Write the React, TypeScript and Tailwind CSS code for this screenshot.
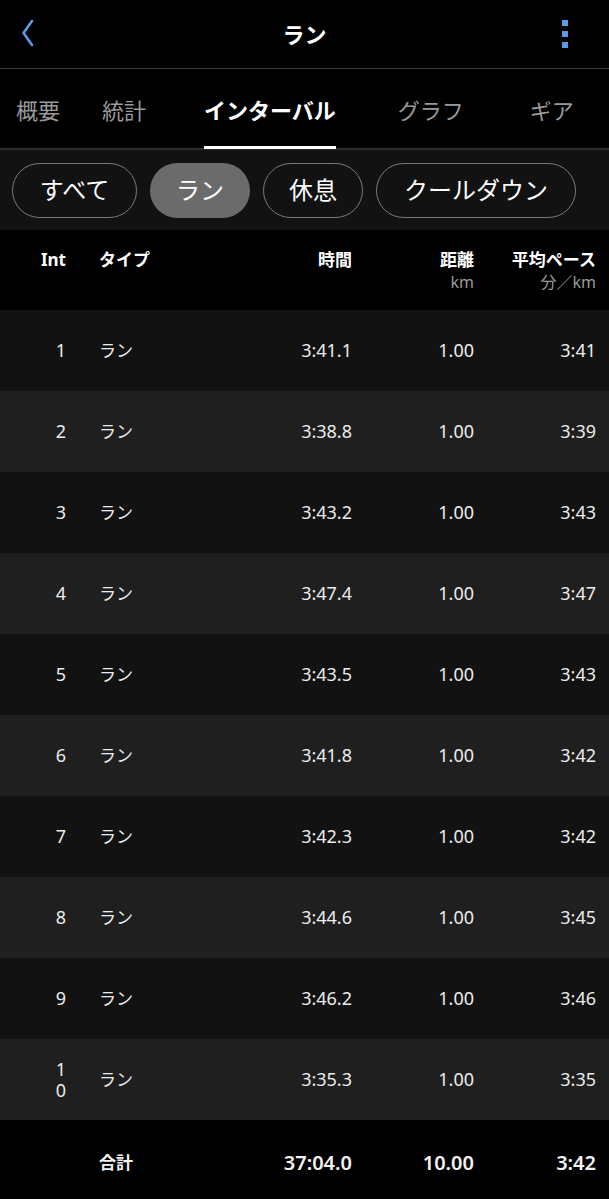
import React from "react";

const rows = [
  ["1", "3:41.1", "1.00", "3:41"],
  ["2", "3:38.8", "1.00", "3:39"],
  ["3", "3:43.2", "1.00", "3:43"],
  ["4", "3:47.4", "1.00", "3:47"],
  ["5", "3:43.5", "1.00", "3:43"],
  ["6", "3:41.8", "1.00", "3:42"],
  ["7", "3:42.3", "1.00", "3:42"],
  ["8", "3:44.6", "1.00", "3:45"],
  ["9", "3:46.2", "1.00", "3:46"],
  ["10", "3:35.3", "1.00", "3:35"],
];

export default function App() {
  return (
    <div
      className="w-[609px] h-[1199px] bg-black text-white overflow-hidden"
      style={{ fontFamily: '"Noto Sans", "Noto Sans CJK JP", sans-serif' }}
    >
      {/* Header */}
      <div className="h-[69px] flex items-center justify-between px-[20px] border-b border-[#3a3a3a]">
        <svg width="14" height="28" viewBox="0 0 14 28" className="ml-[1px] mt-[-2px]">
          <path d="M11 2 L2.5 14 L11 26" fill="none" stroke="#5b9be6" strokeWidth="2.6" strokeLinecap="round" strokeLinejoin="round" />
        </svg>
        <div className="text-[22px] font-bold leading-none ml-[12px]">ラン</div>
        <div className="flex flex-col gap-[5px] mr-[21px]">
          <div className="w-[6px] h-[6px] bg-[#5b9be6]" />
          <div className="w-[6px] h-[6px] bg-[#5b9be6]" />
          <div className="w-[6px] h-[6px] bg-[#5b9be6]" />
        </div>
      </div>

      {/* Tabs */}
      <div className="h-[81px] flex items-stretch pl-[16px] border-b-2 border-[#2e2e2e] text-[22px] text-[#9a9a9a]">
        <div className="flex items-center pt-[3px]">概要</div>
        <div className="flex items-center pt-[3px] ml-[42px]">統計</div>
        <div className="relative flex items-center pt-[3px] ml-[58px] text-white font-bold">
          インターバル
          <div className="absolute left-0 right-0 bottom-[-1px] h-[3px] bg-white" />
        </div>
        <div className="flex items-center pt-[3px] ml-[62px]">グラフ</div>
        <div className="flex items-center pt-[3px] ml-[66px]">ギア</div>
      </div>

      {/* Filter pills */}
      <div className="h-[80px] bg-[#121212] flex items-center pl-[12px] gap-[13px] text-[24px] text-white">
        <div className="w-[125px] h-[55px] rounded-full border-[1.5px] border-[#7a7a7a] flex items-center justify-center">すべて</div>
        <div className="w-[100px] h-[55px] rounded-full bg-[#6b6b6b] flex items-center justify-center">ラン</div>
        <div className="w-[100px] h-[55px] rounded-full border-[1.5px] border-[#7a7a7a] flex items-center justify-center">休息</div>
        <div className="w-[200px] h-[55px] rounded-full border-[1.5px] border-[#7a7a7a] flex items-center justify-center">クールダウン</div>
      </div>

      {/* Table header */}
      <div className="h-[80px] grid grid-cols-[66px_164px_122px_122px_122px] pt-[19px] text-[17px] font-bold leading-[22px]">
        <div className="text-right">Int</div>
        <div className="pl-[33px]">タイプ</div>
        <div className="text-right">時間</div>
        <div className="text-right">
          <div>距離</div>
          <div className="text-[16px] font-normal text-[#9a9a9a] leading-[22px]">km</div>
        </div>
        <div className="text-right">
          <div>平均ペース</div>
          <div className="text-[16px] font-normal text-[#9a9a9a] leading-[22px]">分／km</div>
        </div>
      </div>

      {/* Rows */}
      {rows.map((r, i) => (
        <div
          key={r[0]}
          className={`h-[81px] grid grid-cols-[66px_164px_122px_122px_122px] items-center text-[18px] text-[#ececec] leading-[21px] ${
            i % 2 === 0 ? "bg-[#121212]" : "bg-[#1f1f1f]"
          }`}
        >
          <div className="text-right">
            <span className="inline-block max-w-[12px] break-all text-right">{r[0]}</span>
          </div>
          <div className="pl-[33px] text-[17px]">ラン</div>
          <div className="text-right">{r[1]}</div>
          <div className="text-right">{r[2]}</div>
          <div className="text-right">{r[3]}</div>
        </div>
      ))}

      {/* Total */}
      <div className="h-[79px] grid grid-cols-[66px_164px_122px_122px_122px] items-center text-[20px] font-semibold text-[#f2f2f2] pt-[6px]">
        <div />
        <div className="pl-[33px] text-[17px] font-bold">合計</div>
        <div className="text-right">37:04.0</div>
        <div className="text-right">10.00</div>
        <div className="text-right">3:42</div>
      </div>
    </div>
  );
}
